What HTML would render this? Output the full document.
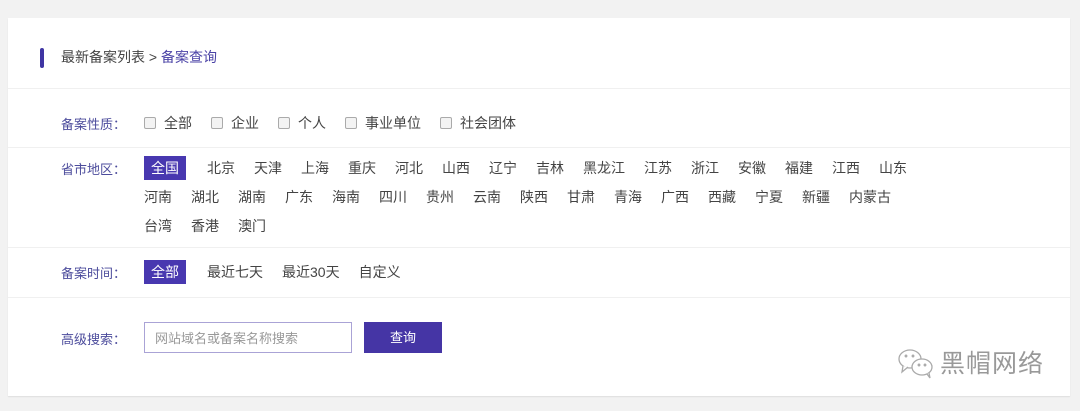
<!DOCTYPE html>
<html><head><meta charset="utf-8"><style>
body{margin:0;background:#f2f2f2;font-family:"Liberation Sans","Noto Sans CJK SC",sans-serif;font-size:13px;color:#333;}
.card{position:absolute;left:8px;top:18px;width:1062px;height:378px;background:#fff;box-shadow:0 1px 1px #ddd;}
.hd{position:absolute;left:0;top:0;width:100%;height:70px;border-bottom:1px solid #f0f0f0;}
.bar{position:absolute;left:32px;top:30px;width:4px;height:20px;background:#3f35a3;border-radius:2px;}
.ht{position:absolute;left:53px;top:29px;font-size:14px;color:#444;}
.ht span{color:#4a42a6}
.row{position:absolute;left:0;width:100%;border-bottom:1px solid #f0f0f0;}
.lb{position:absolute;left:53px;color:#4c4c9c;}
.opts{position:absolute;left:136px;width:820px;font-size:14px}
.it{display:inline-block;margin-right:19px;line-height:24px;height:24px;color:#444;white-space:nowrap}
.sel{background:#4838b0;color:#fff;padding:0 7px;margin-right:21px}
.cb{display:inline-block;width:10px;height:10px;border:1px solid #aaa;border-radius:2px;background:#f3f3f3;vertical-align:-1px;margin-right:8px}
.ln{height:29px}
input{position:absolute;left:136px;top:304px;width:208px;height:31px;box-sizing:border-box;border:1px solid #aaa3d6;padding:0 10px;font-family:inherit;font-size:13px;color:#999;outline:none}
.btn{position:absolute;left:356px;top:304px;width:78px;height:31px;background:#4535a5;color:#fff;text-align:center;line-height:31px}
.wm{position:absolute;left:932px;top:326px;font-size:25px;color:#999;letter-spacing:1px}
</style></head><body>
<div class="card">
<div class="hd"><div class="bar"></div><div class="ht">最新备案列表 &gt; <span>备案查询</span></div></div>
<div class="row" style="top:71px;height:58px"><div class="lb" style="top:25px">备案性质：</div>
<div class="opts" style="top:22px"><span class="it"><i class="cb"></i>全部</span><span class="it"><i class="cb"></i>企业</span><span class="it"><i class="cb"></i>个人</span><span class="it"><i class="cb"></i>事业单位</span><span class="it"><i class="cb"></i>社会团体</span></div></div>
<div class="row" style="top:130px;height:99px"><div class="lb" style="top:11px">省市地区：</div>
<div class="opts" style="top:8px"><div class="ln"><span class="it sel">全国</span><span class="it">北京</span><span class="it">天津</span><span class="it">上海</span><span class="it">重庆</span><span class="it">河北</span><span class="it">山西</span><span class="it">辽宁</span><span class="it">吉林</span><span class="it">黑龙江</span><span class="it">江苏</span><span class="it">浙江</span><span class="it">安徽</span><span class="it">福建</span><span class="it">江西</span><span class="it">山东</span></div>
<div class="ln"><span class="it">河南</span><span class="it">湖北</span><span class="it">湖南</span><span class="it">广东</span><span class="it">海南</span><span class="it">四川</span><span class="it">贵州</span><span class="it">云南</span><span class="it">陕西</span><span class="it">甘肃</span><span class="it">青海</span><span class="it">广西</span><span class="it">西藏</span><span class="it">宁夏</span><span class="it">新疆</span><span class="it">内蒙古</span></div>
<div class="ln"><span class="it">台湾</span><span class="it">香港</span><span class="it">澳门</span></div></div></div>
<div class="row" style="top:230px;height:49px"><div class="lb" style="top:15px">备案时间：</div>
<div class="opts" style="top:12px"><span class="it sel">全部</span><span class="it">最近七天</span><span class="it">最近30天</span><span class="it">自定义</span></div></div>
<div class="lb" style="top:311px">高级搜索：</div>
<input value="网站域名或备案名称搜索"><div class="btn">查询</div>
<svg style="position:absolute;left:889px;top:330px" width="40" height="32" viewBox="0 0 40 32" fill="#fff" stroke="#aaa" stroke-width="1.3">
<ellipse cx="13" cy="11" rx="11" ry="9"/><path d="M6 18 L5 24 L11 19"/>
<ellipse cx="25" cy="19" rx="10" ry="8"/><path d="M30 26 L33 30 L32 25"/>
<circle cx="9" cy="8" r="0.8"/><circle cx="16" cy="8" r="0.8"/><circle cx="22" cy="17" r="0.8"/><circle cx="28" cy="17" r="0.8"/></svg>
<div class="wm">黑帽网络</div>
</div>
</body></html>
